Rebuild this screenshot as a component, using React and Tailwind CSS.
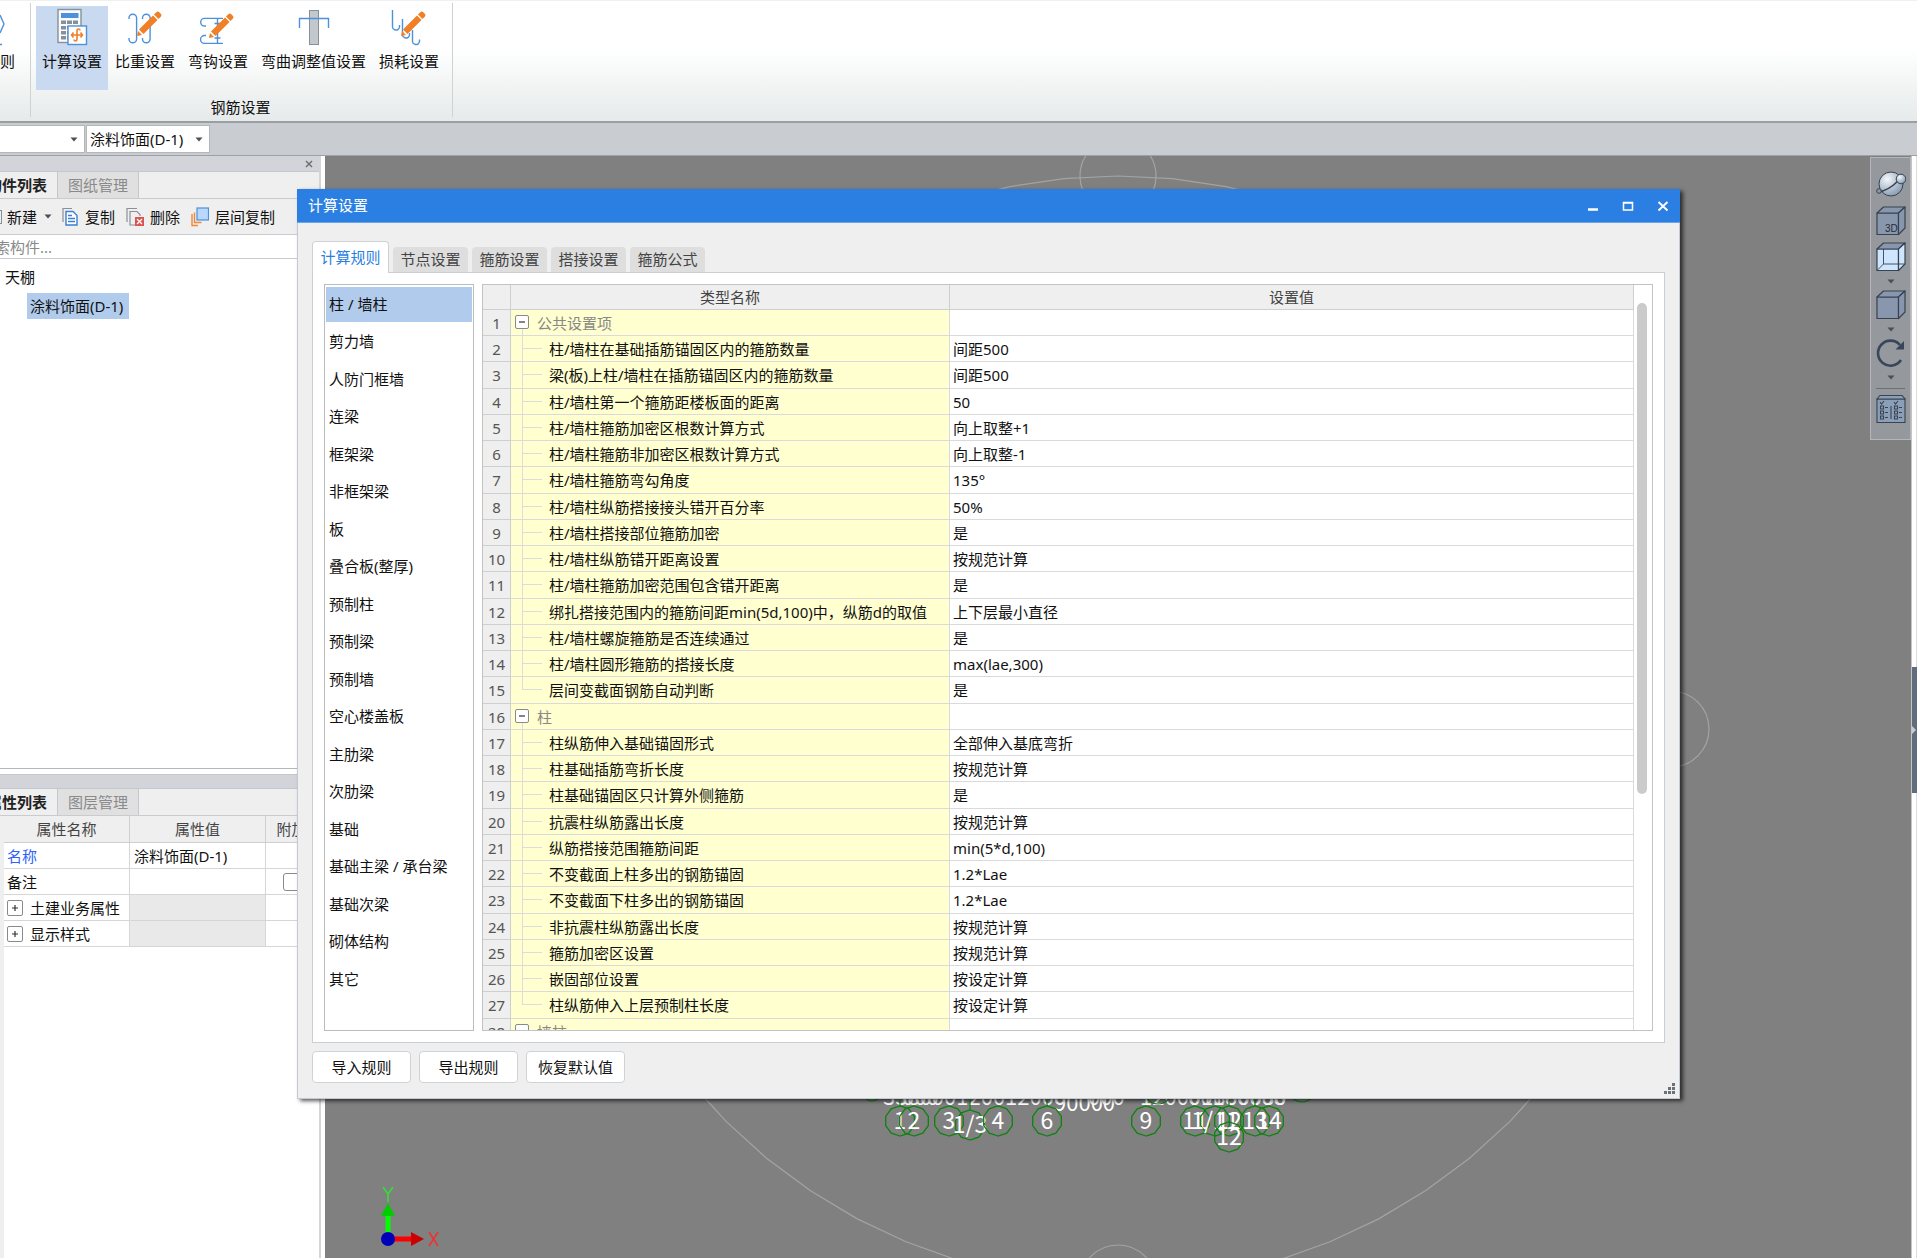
import React from "react";

const ribbonFont = "font-['Noto_Sans','Noto_Sans_CJK_SC',sans-serif]";

function Caret({ className = "" }) {
  return (
    <svg viewBox="0 0 8 5" className={`h-[5px] w-[8px] ${className}`} aria-hidden="true">
      <path d="M0.5 0.5h7L4 4.5z" fill="#4a4f57" />
    </svg>
  );
}

function Pencil({ x, y }) {
  return (
    <g transform={`translate(${x} ${y})`} fill="#f07f26">
      <path d="M0 0l1-5 4 4z" />
      <path d="M2-6.5L6.500-2 20.500-16 16-20.500z" />
      <path d="M17-21.500L21.500-17l2.300-2.300q1.500-1.500 0-3l-1.500-1.500q-1.500-1.500-3 0z" />
    </g>
  );
}

const blueLine = { fill: "none", stroke: "#4d90dc", strokeWidth: 1.4 };

function CalculatorIcon() {
  return (
    <svg viewBox="55 8 36 38" className="h-[38px] w-[36px]" aria-hidden="true">
      <rect x="59" y="9.500" width="23" height="33" fill="#fafbfc" stroke="#86909a" strokeWidth="1.400" />
      <rect x="62" y="13" width="17.500" height="5" fill="#4d90dc" />
      <g fill="#86909a">
        {[20.5, 26, 31, 36].map((y) =>
          [62, 68, 74].map((x) => <rect key={`${x}${y}`} x={x} y={y} width="5" height="3.500" />)
        )}
      </g>
      <rect x="69" y="26" width="18.500" height="18.500" fill="#fff" stroke="#4d90dc" strokeWidth="1.400" />
      <g fill="none" stroke="#f07f26" strokeWidth="1.600">
        <path d="M81 30.500q0-1.500-1.500-1.500t-1.500 2v8q0 2-1.500 2t-1.500-1.500" />
        <path d="M72.500 35h11M74.500 32.500L72.500 35l2 2.500M81.500 32.500l2 2.500-2 2.500" />
      </g>
    </svg>
  );
}

function WeightIcon() {
  return (
    <svg viewBox="127 8 36 38" className="h-[38px] w-[36px]" aria-hidden="true">
      <g {...blueLine}>
        <path d="M129 19v-1a3.800 3.800 0 0 1 7.600 0v21a3.800 3.800 0 0 1-7.600 0v-1" />
        <path d="M142.500 19v-1a3.800 3.800 0 0 1 7.600 0v21a3.800 3.800 0 0 1-7.600 0v-1" />
      </g>
      <Pencil x={137} y={36} />
    </svg>
  );
}

function HookIcon() {
  return (
    <svg viewBox="200 8 36 38" className="h-[38px] w-[36px]" aria-hidden="true">
      <g {...blueLine}>
        <path d="M206 26h-1.500a3.800 3.800 0 0 1 0-7.600H223" />
        <path d="M206 35.500h-1.500a3.800 3.800 0 0 0 0 7.900H223" />
        <path d="M217.500 18.500v25M214.500 23.500h6M214.500 38h6" />
      </g>
      <Pencil x={209} y={38} />
    </svg>
  );
}

function BendIcon() {
  return (
    <svg viewBox="295 8 36 38" className="h-[38px] w-[36px]" aria-hidden="true">
      <rect x="308.500" y="10.500" width="9" height="34" fill="#c3c8cc" stroke="#86909a" />
      <path d="M298.500 28v-9.500h29V28" {...blueLine} />
    </svg>
  );
}

function LossIcon() {
  return (
    <svg viewBox="390 8 36 38" className="h-[38px] w-[36px]" aria-hidden="true">
      <g {...blueLine}>
        <path d="M391.500 10v16a3.500 3.500 0 0 0 7 1v-2" />
        <path d="M401.500 19v15a3.500 3.500 0 0 0 7 1v-2" />
        <path d="M411.500 30v10.500a3.500 3.500 0 0 0 7 1v-2" />
      </g>
      <Pencil x={400} y={36} />
    </svg>
  );
}

const ribbonItems = [
  { label: "计算设置", Icon: CalculatorIcon, active: true },
  { label: "比重设置", Icon: WeightIcon },
  { label: "弯钩设置", Icon: HookIcon },
  { label: "弯曲调整值设置", Icon: BendIcon },
  { label: "损耗设置", Icon: LossIcon },
];

function Ribbon() {
  return (
    <header className="flex h-[123px] shrink-0 border-t border-b-2 border-t-[#f0f0f0] border-b-[#9a9fa4] bg-gradient-to-b from-white from-40% to-[#e6eaea]">
      <div className="flex w-[30px] shrink-0 flex-col overflow-hidden pt-[7px]">
        <svg viewBox="0 0 30 38" className="h-[38px] w-[30px]" aria-hidden="true">
          <path d="M0 7l4 9-4 9M0 36.500h2" {...blueLine} />
        </svg>
        <button type="button" className="mt-[3px] flex h-6 w-[15px] items-center justify-end whitespace-nowrap">
          规则
        </button>
      </div>
      <div className="mt-0.5 mb-1 flex flex-col border-x border-[#cfd2d4] pr-[7px] pl-[5px]">
        <div className="flex gap-px">
          {ribbonItems.map(({ label, Icon, active }) => (
            <button
              key={label}
              type="button"
              aria-pressed={Boolean(active)}
              className={`mt-[3px] flex h-[84px] flex-col items-center px-1.5 pt-[2px] ${active ? "bg-[#c9daf0]" : ""}`}
            >
              <Icon />
              <span className="mt-[3px] flex h-6 items-center whitespace-nowrap">{label}</span>
            </button>
          ))}
        </div>
        <div className="mt-[6px] flex h-6 items-center justify-center">钢筋设置</div>
      </div>
    </header>
  );
}

function Combo({ label, value, className }) {
  return (
    <div className={`relative h-[28px] border border-[#b4b7ba] bg-white ${className}`}>
      <select aria-label={label} defaultValue={value} className="h-full w-full appearance-none bg-transparent pl-[3px] outline-none">
        <option value={value}>{value}</option>
      </select>
      <Caret className="pointer-events-none absolute top-[11px] right-[6px]" />
    </div>
  );
}

function SelectorBar() {
  return (
    <div className="flex h-[33px] shrink-0 items-center border-b border-[#9ba1a6] bg-[#c9ccd1]">
      <Combo label="构件类型" value="" className="w-[85px] border-l-0" />
      <Combo label="构件" value="涂料饰面(D-1)" className="ml-px w-[124px]" />
    </div>
  );
}

function PanelTabs({ active, other }) {
  return (
    <div role="tablist" className="flex h-[27px] shrink-0 items-stretch border-b border-[#c9cbce] bg-[#efefef]">
      <button role="tab" aria-selected="true" type="button" className="flex w-[58px] items-center justify-end overflow-hidden border-r border-[#c3c8ce] pr-[10px] font-semibold whitespace-nowrap text-[#222]">
        {active}
      </button>
      <button role="tab" aria-selected="false" type="button" className="flex w-[81px] items-center justify-center border-r border-[#c3c8ce] bg-[#e0e0e0] text-[#8a8a8a]">
        {other}
      </button>
    </div>
  );
}

function Expander({ open, className = "" }) {
  return (
    <button
      type="button"
      aria-label={open ? "折叠" : "展开"}
      className={`flex shrink-0 items-center justify-center rounded-[2px] border border-[#8a8a8a] bg-white ${className}`}
    >
      <svg viewBox="0 0 8 8" className="h-2 w-2" aria-hidden="true">
        <path d={open ? "M1 4h6" : "M1 4h6M4 1v6"} stroke="#333" strokeWidth="1.200" />
      </svg>
    </button>
  );
}

const propertyRows = [
  { name: "名称", value: "涂料饰面(D-1)", link: true },
  { name: "备注", value: "", check: true },
  { name: "土建业务属性", group: true },
  { name: "显示样式", group: true },
];

function LeftPanel() {
  return (
    <aside className="flex w-[325px] shrink-0 flex-col bg-white">
      <div className="flex min-h-0 w-[321px] flex-1 flex-col border-r-2 border-[#d3d6d9]">
        <div className="flex h-[16px] shrink-0 items-center justify-end border-b border-[#c3c8ce] bg-[#d3d4d9] pr-[6px]">
          <button type="button" aria-label="关闭面板">
            <svg viewBox="0 0 8 8" className="h-2 w-2" aria-hidden="true">
              <path d="M1 1l6 6M7 1L1 7" stroke="#707070" strokeWidth="1.500" />
            </svg>
          </button>
        </div>
        <PanelTabs active="构件列表" other="图纸管理" />
        <div className="flex h-[36px] shrink-0 items-center overflow-hidden border-b border-[#c9cbce] bg-[#efefef]">
          <span className="h-[14px] w-[2px] border-y border-r border-[#8a8f94]" />
          <button type="button" className="ml-[5px] flex items-center gap-[7px]">
            新建
            <Caret />
          </button>
          <button type="button" className="ml-[10px] flex items-center gap-[7px]">
            <svg viewBox="0 0 16 20" className="h-5 w-4" fill="none" aria-hidden="true">
              <path d="M1 15V1.500h9" stroke="#8a9096" strokeWidth="1.200" />
              <path d="M4 4.500h7l4 4V18H4z" fill="#fff" stroke="#3d7fd0" strokeWidth="1.400" />
              <path d="M6 8.500h4M6 11.500h7M6 14.500h7" stroke="#3d7fd0" strokeWidth="1.400" />
            </svg>
            复制
          </button>
          <button type="button" className="ml-[11px] flex items-center gap-[6px]">
            <svg viewBox="0 0 18 20" className="h-5 w-[18px]" fill="none" aria-hidden="true">
              <path d="M1 15V1.500h10" stroke="#8a9096" strokeWidth="1.200" />
              <path d="M9 18H4V4.500h7l3 3V9" stroke="#8a9096" strokeWidth="1.200" />
              <rect x="9" y="10" width="9" height="9" fill="#d9534f" />
              <path d="M11 12l5 5M16 12l-5 5" stroke="#fff" strokeWidth="1.300" />
            </svg>
            删除
          </button>
          <button type="button" className="ml-[11px] flex items-center gap-[6px]">
            <svg viewBox="0 0 18 20" className="h-5 w-[18px]" fill="none" aria-hidden="true">
              <path d="M1 7v11.500h6M3.500 5.500V15.500h7" stroke="#f0883a" strokeWidth="1.400" />
              <rect x="6" y="1" width="11.500" height="12" fill="#b9d8fb" stroke="#4d90dc" strokeWidth="1.200" />
            </svg>
            层间复制
          </button>
        </div>
        <div className="h-[24px] shrink-0 overflow-hidden border-b border-[#c9cbce]">
          <input aria-label="搜索构件" placeholder="搜索构件..." className="-ml-5 h-full w-full bg-transparent outline-none placeholder:text-[#8a8a8a]" />
        </div>
        <ul className="flex min-h-0 basis-[510px] flex-col items-start border-b border-[#b5b8bb] pt-[3px]">
          <li className="flex h-[30px] items-center pl-[5px]">天棚</li>
          <li className="mt-px ml-[27px] flex h-[26px] items-center bg-[#b1cbec] pr-[6px] pl-[3px]">涂料饰面(D-1)</li>
        </ul>
        <div className="mt-[5px] h-[15px] shrink-0 border-y border-[#c3c8ce] bg-[#d3d4d9]" />
        <PanelTabs active="属性列表" other="图层管理" />
        <div className="flex-1 overflow-hidden border-l-4 border-[#efefef]">
          <table className="w-[314px] table-fixed border-separate border-spacing-0">
            <colgroup>
              <col className="w-[126px]" />
              <col className="w-[136px]" />
              <col className="w-[52px]" />
            </colgroup>
            <thead>
              <tr className="h-[27px] bg-[#efefef] text-[#444]">
                {["属性名称", "属性值", "附加"].map((h) => (
                  <th key={h} className="border-r border-b border-[#cfcfcf] p-0 font-normal">
                    {h}
                  </th>
                ))}
              </tr>
            </thead>
            <tbody>
              {propertyRows.map((row) => (
                <tr key={row.name} className="h-[26px]">
                  <td className="border-r border-b border-[#d6d6d6] p-0">
                    <div className={`flex items-center ${row.group ? "gap-[7px] pl-[3px]" : "pl-[3px]"} ${row.link ? "text-[#2f62f5]" : ""}`}>
                      {row.group && <Expander className="h-4 w-4" />}
                      {row.name}
                    </div>
                  </td>
                  <td className={`border-r border-b border-[#d6d6d6] p-0 pl-1 ${row.group ? "bg-[#e9e9e9]" : ""}`}>{row.value}</td>
                  <td className="border-b border-[#d6d6d6] p-0">
                    {row.check && (
                      <input type="checkbox" aria-label="附加备注" className="mx-auto block h-[18px] w-[18px] appearance-none rounded-[3px] border border-[#8a8a8a] bg-white" />
                    )}
                  </td>
                </tr>
              ))}
            </tbody>
          </table>
        </div>
      </div>
    </aside>
  );
}

function ring(cx, cy, r, n, start = 0) {
  return Array.from({ length: n }, (_, i) => {
    const a = start + (i * 2 * Math.PI) / n;
    return `${(cx + r * Math.cos(a)).toFixed(1)},${(cy + r * Math.sin(a)).toFixed(1)}`;
  }).join(" ");
}

const bubbles = [
  ["1", 900, 1121],
  ["2", 914, 1121],
  ["3", 949, 1121],
  ["1/3", 970, 1125],
  ["4", 998, 1121],
  ["6", 1047, 1121],
  ["9", 1146, 1121],
  ["11", 1195, 1121],
  ["1/11", 1215, 1121],
  ["12", 1229, 1121],
  ["12", 1229, 1137],
  ["13", 1255, 1121],
  ["14", 1269, 1121],
];

function Canvas() {
  return (
    <main className="min-w-0 flex-1 overflow-hidden bg-[#808080]">
      <svg viewBox="325 156 1586 1102" width="1586" height="1102" aria-label="模型视图">
        <g fill="none" stroke="#a3a3a3" strokeWidth="1.200">
          <polygon points={ring(1118, 730, 554, 64, Math.PI / 2)} />
          <circle cx="1118" cy="176" r="38" />
          <circle cx="1118" cy="1283" r="38" />
          <circle cx="1671" cy="729" r="38" />
        </g>
        <g fill="#fff" fontFamily="'Noto Sans CJK SC', sans-serif" fontSize="22">
          <text x="883" y="1105">338000120012000</text>
          <text x="902" y="1105">000</text>
          <text x="1054" y="1111">90000</text>
          <text x="1088" y="1105">000</text>
          <text x="1140" y="1105">120001800080</text>
          <text x="1188" y="1105">00180008</text>
        </g>
        <g stroke="#0d820d" strokeWidth="1.200" fill="none">
          <circle cx="872" cy="1092" r="9" />
          <circle cx="1158" cy="1090" r="14" />
          <circle cx="1302" cy="1089" r="13" />
          <path d="M900 1100v6M970 1100v10M1047 1100v6M1229 1100v6M1255 1100v6" />
        </g>
        {bubbles.map(([label, x, y]) => (
          <g key={`${x}-${y}`}>
            <polygon points={ring(x, y, 15, 10, Math.PI / 2)} fill="none" stroke="#0d820d" strokeWidth="1.300" />
            <text x={x} y={y + 8} textAnchor="middle" fill="#fff" fontFamily="'Noto Sans CJK SC', sans-serif" fontSize="23">
              {label}
            </text>
          </g>
        ))}
        <path d="M388 1239v-26" stroke="#0f0" strokeWidth="5" />
        <path d="M388 1203l-7 13h14z" fill="#0c0" />
        <path d="M388 1239h24" stroke="#f00" strokeWidth="5" />
        <path d="M424 1239l-13-7v14z" fill="#c00" />
        <circle cx="388" cy="1239" r="7" fill="#0000b8" />
        <g fill="none" strokeWidth="1.500">
          <path d="M383 1187l5 7 5-7M388 1194v8" stroke="#2de52d" />
          <path d="M429 1232l9 14M438 1232l-9 14" stroke="#f03030" />
        </g>
      </svg>
    </main>
  );
}

function Cube({ face = "#8896ae", glass = false, label }) {
  return (
    <svg viewBox="0 0 30 30" className="block h-[30px] w-[30px]" aria-hidden="true">
      <g stroke="#39424f" strokeWidth="1.200" strokeLinejoin="round">
        <path d="M1 7h21.500v21.500H1z" fill={glass ? "#cfe6ff" : face} />
        <path d="M1 7l6.500-6H29l-6.500 6z" fill={face} />
        <path d="M22.500 7L29 1v21l-6.500 6.500z" fill={glass ? "#cfe6ff" : face} />
        {glass && <path d="M7.500 7v15H29M7.500 22L1 28.500" fill="none" strokeWidth="0.900" />}
      </g>
      {label && (
        <text x="9" y="26" fontSize="10" fontFamily="'Liberation Sans', sans-serif" fill="#252c36">
          {label}
        </text>
      )}
    </svg>
  );
}

function ToolPalette() {
  const caret = <Caret className="mx-auto mt-[7px] mb-[6px] block" />;
  return (
    <div className="absolute top-[157px] right-[6px] flex h-[283px] w-[41px] flex-col items-center border border-[#b4b6b9] bg-[#95989d] pt-[12px]">
      <button type="button" aria-label="动态观察">
        <svg viewBox="0 0 30 28" className="block h-[28px] w-[30px]" aria-hidden="true">
          <defs>
            <radialGradient id="orb" cx="0.35" cy="0.3" r="0.8">
              <stop offset="0" stopColor="#f4f8fc" />
              <stop offset="1" stopColor="#7d93ac" />
            </radialGradient>
          </defs>
          <circle cx="15" cy="14" r="12" fill="url(#orb)" stroke="#39424f" />
          <path d="M2 22q10-1 20-11" fill="none" stroke="#39424f" strokeWidth="1.500" />
          <circle cx="25" cy="9" r="4.800" fill="url(#orb)" stroke="#39424f" />
          <circle cx="3" cy="21" r="2.300" fill="#95989d" stroke="#39424f" />
        </svg>
      </button>
      <button type="button" aria-label="三维" className="mt-[8px]">
        <Cube label="3D" />
      </button>
      <button type="button" aria-label="线框" className="mt-[6px]">
        <Cube glass />
        {caret}
      </button>
      <button type="button" aria-label="实体">
        <Cube />
        {caret}
      </button>
      <button type="button" aria-label="旋转">
        <svg viewBox="0 0 30 30" className="block h-[30px] w-[30px]" aria-hidden="true">
          <path d="M25 22A12.500 12.500 0 1 1 24 7" fill="none" stroke="#39465a" strokeWidth="2.600" />
          <path d="M28 3v8.500h-8.500z" fill="#39465a" />
        </svg>
        {caret}
      </button>
      <div className="mt-[2px] h-px w-[29px] shrink-0 bg-[#6b7075]" />
      <button type="button" aria-label="显示设置" className="mt-[5px]">
        <svg viewBox="0 0 30 30" className="block h-[30px] w-[30px]" fill="none" stroke="#39424f" strokeWidth="1.100" aria-hidden="true">
          <path d="M1 5h28v23.500H1z" fill="#8ba0b8" />
          <path d="M1 5l3-3.500h22L29 5z" fill="#8ba0b8" />
          <path d="M4 8l1.500 2L8 7M18 8l1.500 2L22 7M15 12v13" />
          {[12, 17, 22].map((y) => (
            <path key={y} d={`M4.500 ${y}h3v3h-3zM9 ${y + 1.5}h3M18.500 ${y}h3v3h-3zM23 ${y + 1.5}h3`} />
          ))}
        </svg>
      </button>
    </div>
  );
}

function RightStrip() {
  return (
    <div className="flex w-[6px] shrink-0 flex-col border-r border-l border-r-[#dcdcdc] border-l-[#c4c4c4] bg-white">
      <div className="h-[511px]" />
      <button type="button" aria-label="展开侧栏" className="flex h-[126px] w-[5px] items-center bg-[#5f6d7c]">
        <svg viewBox="0 0 5 8" className="h-2 w-[5px]" aria-hidden="true">
          <path d="M0 0l4 4-4 4z" fill="#c9cdd2" />
        </svg>
      </button>
    </div>
  );
}

const dialogTabs = ["计算规则", "节点设置", "箍筋设置", "搭接设置", "箍筋公式"];

const categories = [
  "柱 / 墙柱", "剪力墙", "人防门框墙", "连梁", "框架梁", "非框架梁", "板", "叠合板(整厚)", "预制柱", "预制梁",
  "预制墙", "空心楼盖板", "主肋梁", "次肋梁", "基础", "基础主梁 / 承台梁", "基础次梁", "砌体结构", "其它",
];

const settings = [
  { group: "公共设置项" },
  ["柱/墙柱在基础插筋锚固区内的箍筋数量", "间距500"],
  ["梁(板)上柱/墙柱在插筋锚固区内的箍筋数量", "间距500"],
  ["柱/墙柱第一个箍筋距楼板面的距离", "50"],
  ["柱/墙柱箍筋加密区根数计算方式", "向上取整+1"],
  ["柱/墙柱箍筋非加密区根数计算方式", "向上取整-1"],
  ["柱/墙柱箍筋弯勾角度", "135°"],
  ["柱/墙柱纵筋搭接接头错开百分率", "50%"],
  ["柱/墙柱搭接部位箍筋加密", "是"],
  ["柱/墙柱纵筋错开距离设置", "按规范计算"],
  ["柱/墙柱箍筋加密范围包含错开距离", "是"],
  ["绑扎搭接范围内的箍筋间距min(5d,100)中，纵筋d的取值", "上下层最小直径"],
  ["柱/墙柱螺旋箍筋是否连续通过", "是"],
  ["柱/墙柱圆形箍筋的搭接长度", "max(lae,300)"],
  ["层间变截面钢筋自动判断", "是"],
  { group: "柱" },
  ["柱纵筋伸入基础锚固形式", "全部伸入基底弯折"],
  ["柱基础插筋弯折长度", "按规范计算"],
  ["柱基础锚固区只计算外侧箍筋", "是"],
  ["抗震柱纵筋露出长度", "按规范计算"],
  ["纵筋搭接范围箍筋间距", "min(5*d,100)"],
  ["不变截面上柱多出的钢筋锚固", "1.2*Lae"],
  ["不变截面下柱多出的钢筋锚固", "1.2*Lae"],
  ["非抗震柱纵筋露出长度", "按规范计算"],
  ["箍筋加密区设置", "按规范计算"],
  ["嵌固部位设置", "按设定计算"],
  ["柱纵筋伸入上层预制柱长度", "按设定计算"],
  { group: "墙柱" },
];

function SettingsTable() {
  return (
    <div className="flex min-w-0 flex-1 overflow-hidden border border-[#c3c3c3] bg-white">
      <div className="min-w-0 flex-1 overflow-hidden">
        <table className="w-full table-fixed border-separate border-spacing-0">
          <colgroup>
            <col className="w-[28px]" />
            <col className="w-[439px]" />
            <col />
          </colgroup>
          <thead>
            <tr className="h-[25px] bg-[#efefef] text-[#444]">
              {["", "类型名称", "设置值"].map((h) => (
                <th key={h} className="h-[25px] border-r border-b border-[#cfcfcf] p-0 leading-5 font-normal">
                  {h}
                </th>
              ))}
            </tr>
          </thead>
          <tbody>
            {settings.map((row, i) => {
              const next = settings[i + 1];
              const last = !next || next.group;
              const tall = i % 4 === 2;
              return (
                <tr key={i} className={tall ? "h-[27px]" : "h-[26px]"}>
                  <td className="border-r border-b border-[#cfcfcf] bg-[#efefef] p-0 text-center leading-5 text-[#555]">{i + 1}</td>
                  <td className="border-r border-b border-[#dadada] bg-[#ffffcf] p-0">
                    <div className={`flex items-stretch leading-5 ${tall ? "h-[26px]" : "h-[25px]"}`}>
                      {row.group ? (
                        <>
                          <div className="flex flex-col">
                            <Expander open className="mt-[5px] ml-[4px] h-[14px] w-[14px]" />
                            <span className="ml-[11px] flex-1 border-l border-[#dcdcdc]" />
                          </div>
                          <span className="ml-[8px] flex items-center text-[#888]">{row.group}</span>
                        </>
                      ) : (
                        <>
                          <div className="ml-[11px] flex w-5 flex-col">
                            <span className="h-[13px] border-b border-l border-[#dcdcdc]" />
                            {!last && <span className="flex-1 border-l border-[#dcdcdc]" />}
                          </div>
                          <span className="ml-[7px] flex items-center whitespace-nowrap">{row[0]}</span>
                        </>
                      )}
                    </div>
                  </td>
                  <td className="border-r border-b border-[#dadada] p-0 pl-[3px] leading-5">{row.group ? "" : row[1]}</td>
                </tr>
              );
            })}
          </tbody>
        </table>
      </div>
      <div className="w-[18px] shrink-0 pt-[18px]">
        <div className="ml-[3px] h-[491px] w-[10px] rounded-full bg-[#cbcbcb]" />
      </div>
    </div>
  );
}

function Dialog() {
  return (
    <section
      role="dialog"
      aria-label="计算设置"
      className="absolute top-[189px] right-[237px] bottom-[159px] left-[297px] flex flex-col border-r border-b border-l border-[#c3cad4] bg-[#efefef] shadow-[3px_2px_4px_rgba(0,0,0,0.65)]"
    >
      <div className="-mx-px flex h-[34px] shrink-0 items-stretch justify-between border-b border-[#6aa5ea] bg-[#2c7fe2] pl-[11px] text-white">
        <h1 className="flex items-center pb-0.5">计算设置</h1>
        <div className="flex">
          {[
            ["最小化", <path key="a" d="M1 9.500h10" strokeWidth="2.500" />],
            ["最大化", <path key="b" d="M1.500 2.500h9v7.500h-9zM1.500 3h9" strokeWidth="1.500" />],
            ["关闭", <path key="c" d="M1.500 2l9 8.500M10.500 2l-9 8.500" strokeWidth="1.900" />],
          ].map(([label, shape]) => (
            <button key={label} type="button" aria-label={label} className="flex w-[35px] items-center justify-center">
              <svg viewBox="0 0 12 12" className="h-3 w-3" fill="none" stroke="#fff" aria-hidden="true">
                {shape}
              </svg>
            </button>
          ))}
        </div>
      </div>
      <div role="tablist" className="mt-[18px] ml-[14px] flex h-[31px] shrink-0 items-end gap-1">
        {dialogTabs.map((tab, i) =>
          i === 0 ? (
            <button key={tab} role="tab" aria-selected="true" type="button" className="z-10 -mb-px flex h-[32px] w-[77px] items-center justify-center rounded-t border border-b-0 border-[#cfd3d8] bg-white pb-px text-[#2c7fe2]">
              {tab}
            </button>
          ) : (
            <button key={tab} role="tab" aria-selected="false" type="button" className="flex h-[25px] w-[75px] items-center justify-center rounded-t bg-[#dedede] pb-0.5 text-[#444]">
              {tab}
            </button>
          )
        )}
      </div>
      <div className="mr-[14px] ml-[14px] flex min-h-0 flex-1 gap-2 border border-[#c9ced4] bg-white p-[11px]">
        <ul className="w-[150px] shrink-0 overflow-hidden border border-[#bcbcbc] pt-[2px]">
          {categories.map((name, i) => (
            <li key={name} className={`flex items-start px-px ${i % 2 ? "h-[38px]" : "h-[37px]"}`}>
              <button
                type="button"
                className={`flex h-[35px] w-full items-center pb-0.5 pl-[3px] whitespace-nowrap ${i === 0 ? "bg-[#b1cbec]" : ""}`}
              >
                {name}
              </button>
            </li>
          ))}
        </ul>
        <SettingsTable />
      </div>
      <div className="flex h-[55px] shrink-0 items-start gap-2 pt-2 pl-[14px]">
        {["导入规则", "导出规则", "恢复默认值"].map((label) => (
          <button key={label} type="button" className="flex h-8 w-[99px] items-center justify-center rounded border border-[#d0d3d6] bg-white">
            {label}
          </button>
        ))}
      </div>
      <svg viewBox="0 0 11 11" className="absolute right-1 bottom-1 h-[11px] w-[11px]" fill="#6b7178" aria-hidden="true">
        <path d="M8 0h3v3H8zM4 4h3v3H4zM8 4h3v3H8zM0 8h3v3H0zM4 8h3v3H4zM8 8h3v3H8z" />
      </svg>
    </section>
  );
}

export default function App() {
  return (
    <div className={`relative flex h-screen flex-col overflow-hidden bg-white text-[15px] leading-[22px] text-[#111] ${ribbonFont}`}>
      <Ribbon />
      <SelectorBar />
      <div className="flex min-h-0 flex-1">
        <LeftPanel />
        <Canvas />
        <RightStrip />
      </div>
      <ToolPalette />
      <Dialog />
    </div>
  );
}
